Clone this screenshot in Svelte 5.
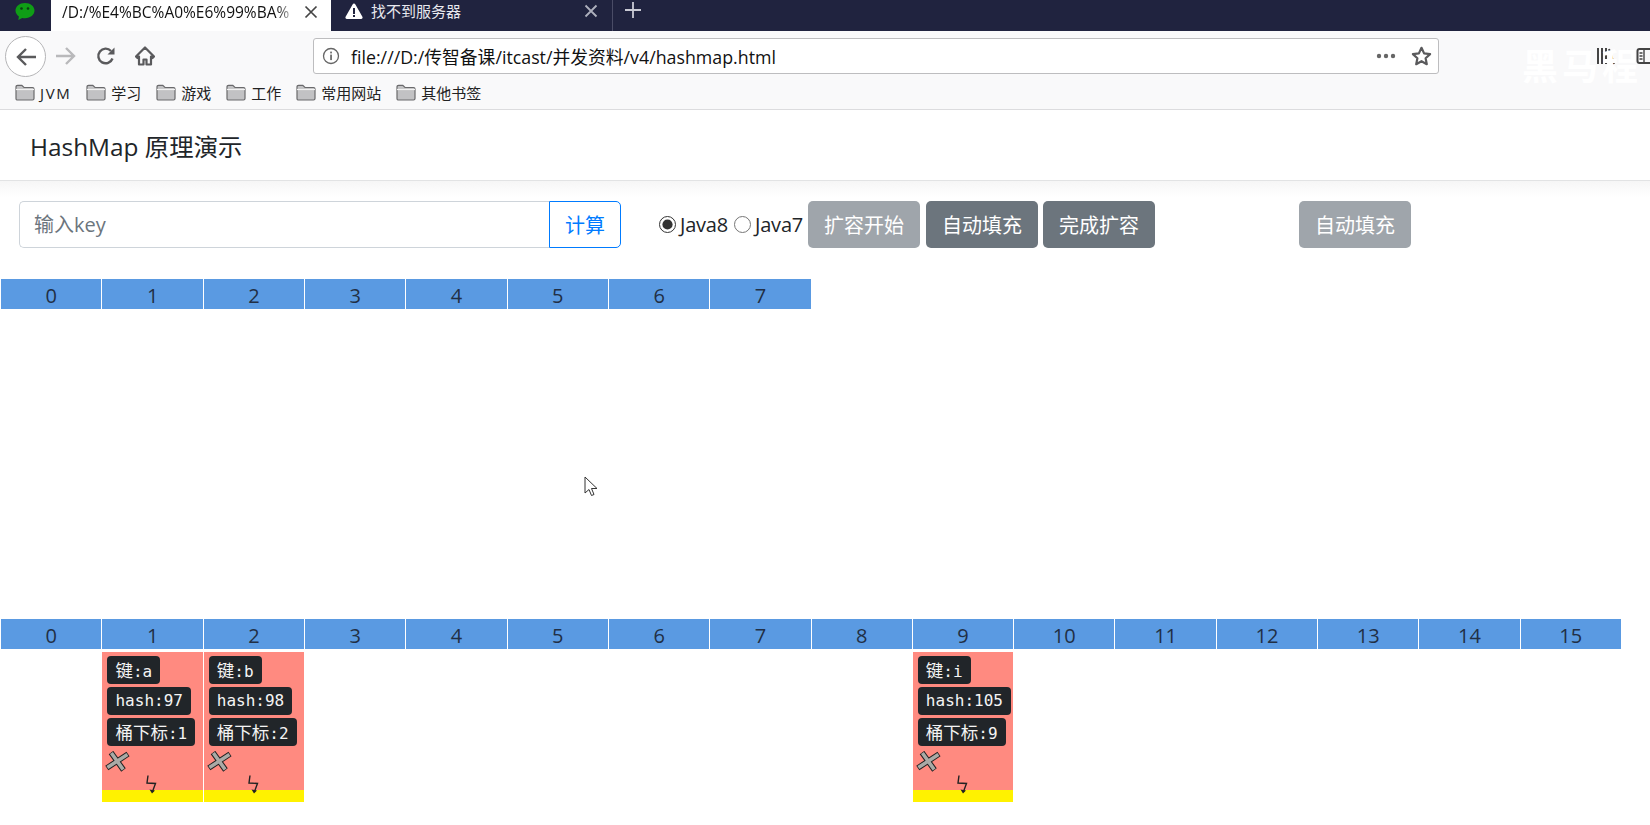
<script>
  const bookmarks = ['JVM', '学习', '游戏', '工作', '常用网站', '其他书签'];
  const small = [0, 1, 2, 3, 4, 5, 6, 7];
  const large = Array.from({ length: 16 }, (_, i) => i);
  const entries = {
    1: { key: 'a', hash: 97 },
    2: { key: 'b', hash: 98 },
    9: { key: 'i', hash: 105 }
  };
</script>

<div class="window">
  <div class="tabs">
    <div class="pinned">
      <svg width="22" height="20" viewBox="0 0 22 20">
        <path d="M11 1C5.500 1 1.500 4.400 1.500 8.600c0 2.400 1.300 4.400 3.400 5.800L4.300 18l3.900-2c.9.200 1.800.300 2.800.300 5.500 0 9.500-3.500 9.500-7.700S16.500 1 11 1z" fill="#0f9d16"/>
        <circle cx="7.500" cy="6.500" r="1.300" fill="#0b3d12"/>
        <circle cx="14" cy="6.500" r="1.300" fill="#0b3d12"/>
      </svg>
    </div>
    <div class="tab active">
      <span class="tab-title">/D:/%E4%BC%A0%E6%99%BA%</span>
      <svg class="close" width="14" height="14" viewBox="0 0 14 14"><path d="M1.500 1.500l11 11M12.500 1.500l-11 11" stroke="#444" stroke-width="1.700"/></svg>
    </div>
    <div class="tab idle">
      <svg width="18" height="16" viewBox="0 0 18 16">
        <path d="M9 .5c.6 0 1.100.3 1.400.9l7 12.300c.6 1-.1 2.300-1.300 2.300H1.900C.7 16 0 14.700.6 13.700l7-12.300C7.900.8 8.400.5 9 .5z" fill="#fff"/>
        <rect x="8" y="5" width="2" height="6" fill="#20233f"/>
        <rect x="8" y="12" width="2" height="2" fill="#20233f"/>
      </svg>
      <span class="tab-title idle-title">找不到服务器</span>
      <svg class="close" width="14" height="14" viewBox="0 0 14 14"><path d="M1.500 1.500l11 11M12.500 1.500l-11 11" stroke="#aeb0bd" stroke-width="1.800"/></svg>
    </div>
    <svg class="plus" width="16" height="16" viewBox="0 0 16 16"><path d="M8 0v16M0 8h16" stroke="#c9cad4" stroke-width="1.800"/></svg>
  </div>

  <div class="nav">
    <div class="back">
      <svg width="22" height="20" viewBox="0 0 22 20"><path d="M21 10H3M11 2l-8 8 8 8" fill="none" stroke="#5a5a5c" stroke-width="2.400"/></svg>
    </div>
    <svg class="forward" width="22" height="20" viewBox="0 0 22 20"><path d="M1 10h18M11 2l8 8-8 8" fill="none" stroke="#b9b9bb" stroke-width="2.400"/></svg>
    <svg class="reload" width="20" height="20" viewBox="0 0 20 20"><path d="M16.500 12.500A7.300 7.300 0 1 1 15 5" fill="none" stroke="#5a5a5c" stroke-width="2.400"/><path d="M18.500 1.500v7h-7z" fill="#5a5a5c"/></svg>
    <svg class="home" width="20" height="20" viewBox="0 0 20 20"><path d="M10 1.500L1 10.500l1.500 1.500 1.500-1.400V18.500h4.500v-5h3v5H16v-7.900l1.500 1.400 1.500-1.500z" fill="none" stroke="#5a5a5c" stroke-width="2.200" stroke-linejoin="round"/></svg>
    <div class="url">
      <svg width="18" height="18" viewBox="0 0 18 18"><circle cx="9" cy="9" r="7.500" fill="none" stroke="#666" stroke-width="1.300"/><rect x="8.200" y="7.600" width="1.700" height="5.500" fill="#666"/><rect x="8.200" y="4.600" width="1.700" height="1.800" fill="#666"/></svg>
      <span class="url-text">file:///D:/传智备课/itcast/并发资料/v4/hashmap.html</span>
      <svg class="dots" width="20" height="6" viewBox="0 0 20 6"><circle cx="3" cy="3" r="2.200" fill="#666"/><circle cx="10" cy="3" r="2.200" fill="#666"/><circle cx="17" cy="3" r="2.200" fill="#666"/></svg>
      <svg class="star" width="21" height="20" viewBox="0 0 21 20"><path d="M10.500 1.800l2.600 5.600 6 .7-4.500 4.100 1.200 6-5.300-3-5.300 3 1.200-6-4.500-4.100 6-.7z" fill="none" stroke="#5a5a5c" stroke-width="2.200" stroke-linejoin="round"/></svg>
    </div>
    <svg class="library" width="20" height="20" viewBox="0 0 20 20"><path d="M2 2v16M6 2v16M10 2v16M13 3l5 15" fill="none" stroke="#444" stroke-width="2"/></svg>
    <svg class="sidebar" width="20" height="20" viewBox="0 0 20 20"><rect x="1.500" y="3" width="22" height="14" rx="2" fill="none" stroke="#444" stroke-width="2"/><path d="M8 3v14M3.500 7h3M3.500 10h3M3.500 13h3" stroke="#444" stroke-width="1.400"/></svg>
    <div class="watermark">黑马程</div>
  </div>

  <div class="bookmarks">
    {#each bookmarks as name}
      <div class="bookmark">
        <svg width="20" height="17" viewBox="0 0 20 17">
          <path d="M1 3c0-1 .6-1.700 1.600-1.700h4.200L9 3.500h8.500c1 0 1.500.6 1.500 1.500v9.500c0 1-.6 1.500-1.500 1.500h-15C1.600 16 1 15.500 1 14.500z" fill="#c2c2c4" stroke="#6a6a6c" stroke-width="1.200"/>
          <path d="M1 5.500h18" stroke="#f2f2f2" stroke-width="1.200"/>
        </svg>
        <span class:latin={name === 'JVM'}>{name}</span>
      </div>
    {/each}
  </div>

  <header class="page-head">HashMap 原理演示</header>

  <div class="controls">
    <div class="input-group">
      <input class="key-input" placeholder="输入key" />
      <button class="calc">计算</button>
    </div>
    <label class="radio first"><input type="radio" name="ver" checked />Java8</label>
    <label class="radio"><input type="radio" name="ver" />Java7</label>
    <button class="btn faded start">扩容开始</button>
    <button class="btn">自动填充</button>
    <button class="btn tight">完成扩容</button>
    <button class="btn faded far">自动填充</button>
  </div>

  <div class="buckets old">
    {#each small as n}
      <div class="bucket">{n}</div>
    {/each}
  </div>

  <div class="buckets new">
    {#each large as n}
      <div class="bucket">{n}</div>
    {/each}
    {#each large as n}
      {#if entries[n]}
        <div class="node" style="grid-column: {n + 1}; grid-row: 2">
          <div class="body">
            <span class="badge"><span class="cjk">键</span>:{entries[n].key}</span>
            <span class="badge">hash:{entries[n].hash}</span>
            <span class="badge"><span class="cjk">桶下标</span>:{n}</span>
            <svg class="cross" width="25" height="21" viewBox="0 0 25 21">
              <path d="M1.800 17L23 3M6 1.500L18.500 19" fill="none" stroke="#222" stroke-width="5.600"/>
              <path d="M2.400 16.600L22.400 3.400M6.400 2L18.100 18.500" fill="none" stroke="#a9aaa6" stroke-width="3.600"/>
            </svg>
            <svg class="bolt" width="12" height="19" viewBox="0 0 12 19">
              <path d="M3 0.500L2 8l8.500.5L7.500 16.500" fill="none" stroke="#222" stroke-width="1.400"/>
              <path d="M4.500 14.500l2.500 4 3-3z" fill="#222"/>
            </svg>
          </div>
          <div class="tail"></div>
        </div>
      {/if}
    {/each}
  </div>

  <svg class="cursor" width="14" height="21" viewBox="0 0 14 21">
    <path d="M1 1v16l4-3.500 2.500 6 2.500-1-2.500-6H13z" fill="#fff" stroke="#333" stroke-width="1"/>
  </svg>
</div>

<style>
  :global(body) {
    margin: 0;
    background: #fff;
    overflow: hidden;
  }

  .window {
    position: relative;
    width: 1650px;
    height: 825px;
    overflow: hidden;
    font-family: "Open Sans", "Noto Sans CJK SC", sans-serif;
    color: #212529;
  }

  .tabs {
    display: flex;
    align-items: center;
    height: 31px;
    background: #20233f;
  }

  .pinned {
    display: flex;
    width: 51px;
    padding: 0 0 7px 14px;
    box-sizing: border-box;
  }

  .tab {
    display: flex;
    align-items: center;
    height: 31px;
    box-sizing: border-box;
    font-size: 15.500px;
  }

  .active {
    width: 280px;
    padding: 0 13px 8px 11px;
    background: #fff;
    color: #111;
  }

  .tab-title {
    flex: 1;
    white-space: nowrap;
    -webkit-mask-image: linear-gradient(to right, #000 92%, transparent);
    mask-image: linear-gradient(to right, #000 92%, transparent);
  }

  .active .close {
    margin-left: 8px;
  }

  .idle {
    width: 282px;
    padding: 0 14px 10px 14px;
    border-right: 1px solid #4a4c66;
    color: #e8e8ee;
    font-size: 15px;
  }

  .idle-title {
    margin-left: 8px;
    -webkit-mask-image: none;
    mask-image: none;
  }

  .plus {
    margin: 0 0 11px 12px;
  }

  .nav {
    position: relative;
    display: flex;
    align-items: center;
    height: 47px;
    padding-left: 5px;
    background: #f9f9fa;
  }

  .back {
    display: flex;
    align-items: center;
    justify-content: center;
    width: 41px;
    height: 41px;
    margin-top: 4px;
    box-sizing: border-box;
    border: 1px solid #b5b5b7;
    border-radius: 50%;
    background: #fff;
  }

  .forward {
    margin: 3px 0 0 9px;
  }

  .reload {
    margin: 3px 0 0 19px;
  }

  .home {
    margin: 3px 0 0 19px;
  }

  .url {
    display: flex;
    align-items: center;
    width: 1126px;
    height: 36px;
    margin: 2px 0 0 158px;
    padding: 0 6px 0 8px;
    box-sizing: border-box;
    border: 1px solid #bdbdbf;
    border-radius: 3px;
    background: #fff;
    font-size: 17.800px;
    color: #111;
  }

  .url-text {
    flex: 1;
    margin-left: 11px;
    white-space: nowrap;
  }

  .dots {
    margin-right: 15px;
  }

  .watermark {
    position: absolute;
    left: 1522px;
    top: 7px;
    font-size: 36px;
    font-weight: 700;
    letter-spacing: 4px;
    color: #fff;
    white-space: nowrap;
  }

  .library {
    position: absolute;
    left: 1596px;
    top: 15px;
  }

  .sidebar {
    position: absolute;
    left: 1636px;
    top: 15px;
    overflow: visible;
  }

  .bookmarks {
    display: flex;
    align-items: center;
    gap: 15px;
    height: 29px;
    padding: 0 0 2px 15px;
    background: #f9f9fa;
    border-bottom: 1px solid #dcdcde;
    font-size: 15px;
    color: #222;
  }

  .bookmark {
    display: flex;
    align-items: center;
    gap: 5px;
  }

  .latin {
    letter-spacing: 1.600px;
  }

  .page-head {
    display: flex;
    align-items: center;
    height: 71px;
    padding-left: 30px;
    box-sizing: border-box;
    border-bottom: 1px solid #e2e3e4;
    font-size: 24.400px;
    color: #212529;
  }

  .controls {
    display: flex;
    align-items: center;
    height: 47px;
    padding: 20px 0 0 19px;
    background: linear-gradient(to bottom, #f6f6f6, #fff 16px) top / 100% 20px no-repeat;
  }

  .input-group {
    display: flex;
    width: 602px;
    height: 47px;
  }

  .key-input {
    flex: 1;
    min-width: 0;
    padding: 0 14px;
    border: 1px solid #ced4da;
    border-right: 0;
    border-radius: 5px 0 0 5px;
    font: inherit;
    font-size: 20px;
    outline: none;
  }

  .key-input::placeholder {
    color: #6c757d;
  }

  .calc {
    width: 72px;
    border: 1px solid #007bff;
    border-radius: 0 5px 5px 0;
    background: #fff;
    color: #007bff;
    font: inherit;
    font-size: 20px;
  }

  .radio {
    display: flex;
    align-items: center;
    gap: 4px;
    margin-left: 6px;
    font-size: 20px;
    letter-spacing: -0.200px;
    color: #212529;
  }

  .radio.first {
    margin-left: 38px;
  }

  .radio input {
    width: 17px;
    height: 17px;
    margin: 0;
    accent-color: #333;
  }

  .btn {
    width: 112px;
    height: 47px;
    margin-left: 6px;
    border: 0;
    border-radius: 5px;
    background: #6c757d;
    color: #fff;
    font: inherit;
    font-size: 20px;
  }

  .faded {
    background: #9fa5ab;
  }

  .start {
    margin-left: 5px;
  }

  .tight {
    margin-left: 5px;
  }

  .far {
    margin-left: 144px;
  }

  .buckets {
    display: grid;
    grid-template-columns: repeat(16, 100.300px);
    column-gap: 1px;
    padding-left: 1.200px;
    align-items: start;
  }

  .old {
    margin-top: 31px;
  }

  .new {
    margin-top: 310px;
  }

  .bucket {
    height: 30px;
    background: #5a9ae2;
    text-align: center;
    font-size: 20px;
    line-height: 33px;
    color: #212f45;
  }

  .node {
    margin-top: 3px;
    height: 150px;
    display: flex;
    flex-direction: column;
  }

  .body {
    position: relative;
    flex: 1;
    display: flex;
    flex-direction: column;
    align-items: flex-start;
    gap: 3px;
    padding: 4px 5px 0;
    background: #ff8a80;
  }

  .tail {
    height: 12px;
    background: #fff200;
  }

  .badge {
    display: block;
    height: 28px;
    padding: 0 8px;
    border-radius: 4px;
    background: #212529;
    color: #f4f4f4;
    font-family: "DejaVu Sans Mono", "Noto Sans CJK SC", monospace;
    font-size: 16px;
    line-height: 28px;
    white-space: nowrap;
  }

  .cjk {
    font-family: "Noto Sans CJK SC", sans-serif;
    font-size: 17.500px;
  }

  .cross {
    margin: 2px 0 0 -2px;
  }

  .bolt {
    position: absolute;
    left: 43px;
    bottom: -4px;
  }

  .cursor {
    position: absolute;
    left: 584px;
    top: 476px;
  }
</style>
